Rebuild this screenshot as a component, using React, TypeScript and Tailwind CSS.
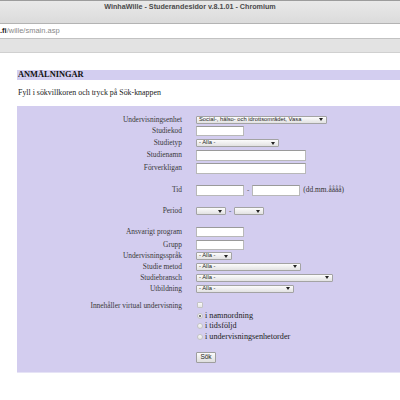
import React from "react";

const sans = "font-['Liberation_Sans',Arial,sans-serif]";

function Tri() {
  return (
    <svg width="4" height="3" viewBox="0 0 4 3" className="shrink-0">
      <path d="M0 0 H4 L2 3 Z" fill="#222" />
    </svg>
  );
}

function Sel({ w, text = "" }: { w: string; text?: string }) {
  return (
    <div
      className={`${w} ${sans} h-[8px] border border-[#a3a3a3] rounded-[1px] bg-linear-to-b from-[#fcfcfc] to-[#e2e2e2] flex items-center justify-between pl-[2px] pr-[3px] text-[5.8px] leading-none text-[#222] whitespace-nowrap overflow-hidden`}
    >
      <span>{text}</span>
      <Tri />
    </div>
  );
}

function Inp({ w, h = "h-[10px]" }: { w: string; h?: string }) {
  return <div className={`${w} ${h} bg-white border border-[#b8b8b8] border-t-[#9a9a9a]`} />;
}

function Row({ label, h, children }: { label?: string; h: string; children?: React.ReactNode }) {
  return (
    <div className={`flex items-center ${h}`}>
      <div className="w-[165px] text-right text-[7.4px] leading-none text-[#3a3a3a] whitespace-nowrap">{label}</div>
      <div className="ml-[14px] flex items-center">{children}</div>
    </div>
  );
}

function Radio({ label, on = false, h }: { label: string; on?: boolean; h: string }) {
  return (
    <Row h={h}>
      <div className="ml-[1px] w-[6px] h-[6px] rounded-full border border-[#c4c4c4] bg-linear-to-b from-[#fafafa] to-[#e4e4e4] flex items-center justify-center">
        {on && <div className="w-[2px] h-[2px] rounded-full bg-[#555]" />}
      </div>
      <span className="ml-[2px] text-[8.2px] leading-none text-[#222] whitespace-nowrap">{label}</span>
    </Row>
  );
}

export default function App() {
  return (
    <div className="w-[400px] h-[400px] bg-white overflow-hidden font-['Liberation_Serif','Times_New_Roman',serif]">
      {/* window chrome */}
      <div className="h-[23px] border-t border-[#9c9c9c] bg-linear-to-b from-[#e9e9e9] to-[#dbdbdb] flex justify-center pr-[20px]">
        <span className={`${sans} mt-[1px] text-[7.2px] font-bold leading-[10px] text-[#4a4a4a]`}>
          WinhaWille - Studerandesidor v.8.1.01 - Chromium
        </span>
      </div>
      <div className="h-px bg-[#b3b3b3]" />
      <div className={`${sans} h-[14px] bg-white flex items-center text-[7.5px] leading-none`}>
        <span className="text-[#222] font-bold">.fi</span>
        <span className="text-[#888]">/wille/smain.asp</span>
      </div>
      <div className="h-px bg-[#c2c2c2]" />
      <div className="h-[13px] bg-[#e3e3e3]" />
      <div className="h-px bg-[#d0d0d0]" />

      {/* page */}
      <div className="pl-[17px]">
        <div className="mt-[17px] h-[10px] bg-[#d3cef0] flex items-center pl-[1px]">
          <span className="text-[8.4px] font-bold leading-none text-[#111]">ANMÄLNINGAR</span>
        </div>
        <div className="mt-[8px] h-[10px] flex items-center pl-[1px] text-[7.9px] leading-none text-[#222]">
          Fyll i sökvillkoren och tryck på Sök-knappen
        </div>

        <div className="mt-[8px] h-[267px] bg-[#d3cdef] border-b border-[#e6e3f6] pt-[8px]">
          <Row label="Undervisningsenhet" h="h-[11px]">
            <Sel w="w-[131px]" text="Social-, hälso- och idrottsområdet, Vasa" />
          </Row>
          <Row label="Studiekod" h="h-[12px]">
            <Inp w="w-[48px]" />
          </Row>
          <Row label="Studietyp" h="h-[12px]">
            <Sel w="w-[83px]" text="- Alla -" />
          </Row>
          <Row label="Studienamn" h="h-[12px]">
            <Inp w="w-[110px]" h="h-[11px]" />
          </Row>
          <Row label="Förverkligan" h="h-[14px]">
            <Inp w="w-[110px]" h="h-[11px]" />
          </Row>
          <div className="h-[9px]" />
          <Row label="Tid" h="h-[12px]">
            <Inp w="w-[48px]" h="h-[11px]" />
            <span className="mx-[3px] text-[7px] text-[#333] leading-none">-</span>
            <Inp w="w-[48px]" h="h-[11px]" />
            <span className="ml-[3px] text-[7.4px] text-[#333] leading-none whitespace-nowrap">(dd.mm.åååå)</span>
          </Row>
          <div className="h-[9px]" />
          <Row label="Period" h="h-[12px]">
            <Sel w="w-[30px]" />
            <span className="mx-[3px] text-[7px] text-[#333] leading-none">-</span>
            <Sel w="w-[30px]" />
          </Row>
          <div className="h-[9px]" />
          <Row label="Ansvarigt program" h="h-[12px]">
            <Inp w="w-[48px]" />
          </Row>
          <Row label="Grupp" h="h-[13px]">
            <Inp w="w-[48px]" />
          </Row>
          <Row label="Undervisningsspråk" h="h-[10px]">
            <Sel w="w-[36px]" text="- Alla -" />
          </Row>
          <Row label="Studie metod" h="h-[11px]">
            <Sel w="w-[105px]" text="- Alla -" />
          </Row>
          <Row label="Studiebransch" h="h-[11px]">
            <Sel w="w-[137px]" text="- Alla -" />
          </Row>
          <Row label="Utbildning" h="h-[11px]">
            <Sel w="w-[98px]" text="- Alla -" />
          </Row>
          <div className="h-[7px]" />
          <Row label="Innehåller virtual undervisning" h="h-[10px]">
            <div className="ml-[1px] -mt-[3px] w-[6px] h-[6px] rounded-[1px] border border-[#c4c4c4] bg-linear-to-b from-[#fafafa] to-[#e6e6e6]" />
          </Row>
          <Radio label="i namnordning" on h="h-[10px]" />
          <Radio label="i tidsföljd" h="h-[11px]" />
          <Radio label="i undervisningsenhetorder" h="h-[11px]" />
          <div className="h-[8px]" />
          <Row h="h-[12px]">
            <div className={`${sans} w-[20px] h-[11px] border border-[#9e9e9e] rounded-[1px] bg-linear-to-b from-[#fbfbfb] to-[#dedede] flex items-center justify-center text-[6.5px] leading-none text-[#222]`}>
              Sök
            </div>
          </Row>
        </div>
      </div>
    </div>
  );
}
